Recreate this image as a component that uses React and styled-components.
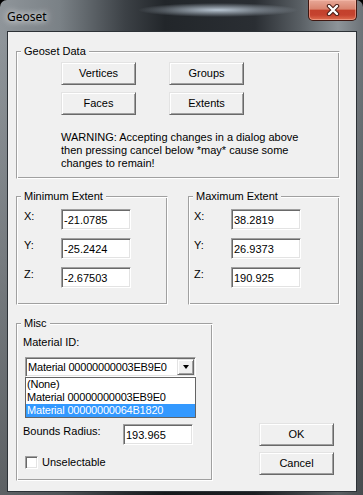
import React from 'react';
import styled, { createGlobalStyle } from 'styled-components';

const Global = createGlobalStyle`
  html, body { margin: 0; padding: 0; background: #000; }
  body { width: 363px; height: 495px; overflow: hidden; }
`;

const Window = styled.div`
  width: 363px;
  height: 495px;
  box-sizing: border-box;
  display: flex;
  flex-direction: column;
  border-radius: 7px 7px 0 0;
  overflow: hidden;
  background:
    radial-gradient(80px 7px at 218px 10px, rgba(200, 214, 228, 0.9), rgba(200, 214, 228, 0) 100%),
    linear-gradient(to bottom, rgba(0, 0, 0, 0) 0px, rgba(0, 0, 0, 0) 40px, rgba(0, 0, 0, 0.35) 495px),
    linear-gradient(to right, #8f959a 0px, #7a8186 60px, #3c4146 125px, #22262a 165px, #2a2e33 255px, #595f64 300px, #8d9499 338px, #6c7277 363px);
`;

const TitleBar = styled.div`
  height: 31px;
  flex: none;
  display: flex;
  justify-content: space-between;
  align-items: flex-start;
  padding: 0 6px 0 7px;
`;

const Title = styled.div`
  margin-top: 9px;
  font-family: "Noto Sans", "Open Sans", sans-serif;
  font-size: 12px;
  line-height: 16px;
  color: #000;
  text-shadow: 0 0 6px rgba(255, 255, 255, 0.9), 0 0 10px rgba(255, 255, 255, 0.7);
`;

const CloseBtn = styled.div`
  width: 47px;
  height: 20px;
  border: 1px solid #3f1711;
  border-top: none;
  border-radius: 0 0 5px 5px;
  background: linear-gradient(to bottom, #e7a898 0%, #d9846f 45%, #c3412c 52%, #c5432f 75%, #de6e50 100%);
  box-shadow: inset 0 0 0 1px rgba(255, 200, 185, 0.45);
  display: flex;
  align-items: center;
  justify-content: center;
`;

const Client = styled.div`
  margin-left: 7px;
  width: 350px;
  height: 461px;
  flex: none;
  box-sizing: border-box;
  border: 1px solid #2c3136;
  background: #f0f0f0;
  padding: 19px 0 0 8px;
  display: flex;
  flex-direction: column;
  font-family: "Liberation Sans", Arial, sans-serif;
  font-size: 11px;
  line-height: 13px;
  color: #000;
`;

const Group = styled.div`
  position: relative;
  box-sizing: border-box;
  flex: none;
  width: ${p => p.$w}px;
  height: ${p => p.$h}px;
  border: 1px solid;
  border-color: #a0a0a0 #fff #fff #a0a0a0;
  box-shadow: inset 1px 1px 0 #fff, inset -1px -1px 0 #a0a0a0;
  padding: ${p => p.$pt}px 0 0 ${p => p.$pl}px;
  display: flex;
  flex-direction: column;
`;

const Legend = styled.span`
  position: absolute;
  left: 4px;
  top: -7px;
  padding: 0 3px;
  background: #f0f0f0;
  line-height: 13px;
  white-space: nowrap;
`;

const ButtonGrid = styled.div`
  display: grid;
  grid-template-columns: 75px 75px;
  column-gap: 33px;
  row-gap: 7px;
`;

const PushButton = styled.div`
  box-sizing: border-box;
  width: 75px;
  height: 23px;
  border: 1px solid;
  border-color: #e3e3e3 #696969 #696969 #e3e3e3;
  box-shadow: inset 1px 1px 0 #fff, inset -1px -1px 0 #a0a0a0;
  background: #f0f0f0;
  display: flex;
  align-items: center;
  justify-content: center;
  line-height: 13px;
`;

const Warning = styled.div`
  margin-top: 16px;
  line-height: 13px;
  white-space: nowrap;
`;

const Row = styled.div`
  display: flex;
  gap: ${p => p.$gap}px;
  margin-top: ${p => p.$mt}px;
  align-items: ${p => p.$align || 'stretch'};
`;

const FieldList = styled.div`
  display: flex;
  flex-direction: column;
  gap: 8px;
`;

const Field = styled.div`
  display: grid;
  grid-template-columns: ${p => p.$label}px 70px;
  align-items: start;
`;

const Label = styled.span`
  padding-top: 1px;
  line-height: 13px;
  white-space: nowrap;
`;

const Edit = styled.div`
  box-sizing: border-box;
  width: 70px;
  height: 21px;
  border: 1px solid;
  border-color: #a0a0a0 #fff #fff #a0a0a0;
  box-shadow: inset 1px 1px 0 #696969, inset -1px -1px 0 #e3e3e3;
  background: #fff;
  padding: 1px 0 0 2px;
  display: flex;
  align-items: center;
`;

const Combo = styled.div`
  position: relative;
  box-sizing: border-box;
  width: 171px;
  height: 20px;
  margin: 8px 0 0 2px;
  border: 1px solid;
  border-color: #a0a0a0 #fff #fff #a0a0a0;
  box-shadow: inset 1px 1px 0 #696969, inset -1px -1px 0 #e3e3e3;
  background: #fff;
  padding: 1px;
  display: flex;
  align-items: stretch;
  letter-spacing: -0.2px;
`;

const ComboText = styled.div`
  flex: 1;
  padding-left: 1px;
  display: flex;
  align-items: center;
  white-space: nowrap;
`;

const DropBtn = styled.div`
  box-sizing: border-box;
  width: 17px;
  border: 1px solid;
  border-color: #e3e3e3 #696969 #696969 #e3e3e3;
  box-shadow: inset 1px 1px 0 #fff, inset -1px -1px 0 #a0a0a0;
  background: #f0f0f0;
  display: flex;
  align-items: center;
  justify-content: center;
`;

const Arrow = styled.div`
  width: 0;
  height: 0;
  border-left: 3.5px solid transparent;
  border-right: 3.5px solid transparent;
  border-top: 4px solid #000;
  margin-left: 1px;
`;

const DropList = styled.div`
  position: absolute;
  left: -1px;
  top: 19px;
  width: 171px;
  box-sizing: border-box;
  border: 1px solid #646464;
  background: #fff;
  display: flex;
  flex-direction: column;
  z-index: 2;
`;

const Option = styled.div`
  height: 13px;
  line-height: 13px;
  padding-left: 1px;
  white-space: nowrap;
  background: ${p => (p.$selected ? '#3399ff' : '#fff')};
  color: ${p => (p.$selected ? '#fff' : '#000')};
`;

const BoundsRow = styled.div`
  display: grid;
  grid-template-columns: 100px 70px;
  align-items: start;
  margin-top: 47px;
`;

const CheckRow = styled.div`
  display: flex;
  align-items: center;
  gap: 4px;
  margin: 11px 0 0 2px;
`;

const CheckBox = styled.div`
  box-sizing: border-box;
  width: 13px;
  height: 13px;
  border: 1px solid;
  border-color: #a0a0a0 #fff #fff #a0a0a0;
  box-shadow: inset 1px 1px 0 #696969, inset -1px -1px 0 #e3e3e3;
  background: #fff;
`;

const DialogButtons = styled.div`
  display: flex;
  flex-direction: column;
  gap: 6px;
  margin: 0 0 6px 46px;
`;

const CloseIcon = () => (
  <svg width="14" height="12" viewBox="0 0 14 12">
    <path d="M3 2 L11 10 M11 2 L3 10" stroke="#4a1d16" strokeWidth="4.4" strokeLinecap="round" fill="none" />
    <path d="M3 2 L11 10 M11 2 L3 10" stroke="#fff" strokeWidth="2.4" strokeLinecap="round" fill="none" />
  </svg>
);

const ExtentGroup = ({ title, pad, values }) => (
  <Group $w={152} $h={109} $pt={12} $pl={pad}>
    <Legend>{title}</Legend>
    <FieldList>
      {['X:', 'Y:', 'Z:'].map((l, i) => (
        <Field key={l} $label={37}>
          <Label>{l}</Label>
          <Edit>{values[i]}</Edit>
        </Field>
      ))}
    </FieldList>
  </Group>
);

export default function App() {
  return (
    <>
      <Global />
      <Window>
        <TitleBar>
          <Title>Geoset</Title>
          <CloseBtn>
            <CloseIcon />
          </CloseBtn>
        </TitleBar>
        <Client>
          <Group $w={324} $h={128} $pt={10} $pl={44}>
            <Legend>Geoset Data</Legend>
            <ButtonGrid>
              <PushButton>Vertices</PushButton>
              <PushButton>Groups</PushButton>
              <PushButton>Faces</PushButton>
              <PushButton>Extents</PushButton>
            </ButtonGrid>
            <Warning>
              WARNING: Accepting changes in a dialog above
              <br />
              then pressing cancel below *may* cause some
              <br />
              changes to remain!
            </Warning>
          </Group>
          <Row $gap={20} $mt={17}>
            <ExtentGroup title="Minimum Extent" pad={7} values={['-21.0785', '-25.2424', '-2.67503']} />
            <ExtentGroup title="Maximum Extent" pad={5} values={['38.2819', '26.9373', '190.925']} />
          </Row>
          <Row $gap={0} $mt={18} $align="flex-end">
            <Group $w={197} $h={158} $pt={11} $pl={6}>
              <Legend>Misc</Legend>
              <Label>Material ID:</Label>
              <Combo>
                <ComboText>Material 00000000003EB9E0</ComboText>
                <DropBtn>
                  <Arrow />
                </DropBtn>
                <DropList>
                  <Option>(None)</Option>
                  <Option>Material 00000000003EB9E0</Option>
                  <Option $selected>Material 00000000064B1820</Option>
                </DropList>
              </Combo>
              <BoundsRow>
                <Label>Bounds Radius:</Label>
                <Edit>193.965</Edit>
              </BoundsRow>
              <CheckRow>
                <CheckBox />
                <span>Unselectable</span>
              </CheckRow>
            </Group>
            <DialogButtons>
              <PushButton>OK</PushButton>
              <PushButton>Cancel</PushButton>
            </DialogButtons>
          </Row>
        </Client>
      </Window>
    </>
  );
}
